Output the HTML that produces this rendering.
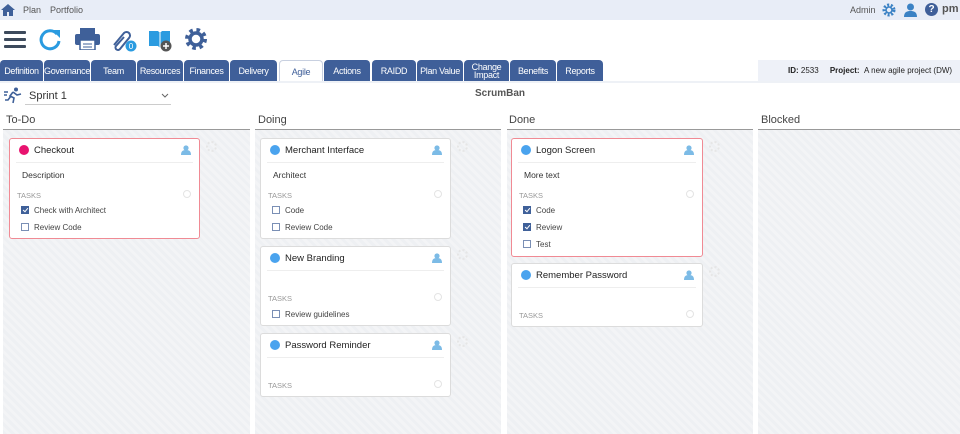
<!DOCTYPE html><html><head><style>
*{box-sizing:border-box;margin:0;padding:0}
body{width:960px;height:434px;overflow:hidden;background:#fff;font-family:"Liberation Sans",sans-serif;position:relative;color:#333}
.a{position:absolute}
.top{left:0;top:0;width:960px;height:20px;background:#e8edf7}
.tab{position:absolute;top:60px;height:22px;background:#3f5f99;color:#fff;font-size:9px;text-align:center;line-height:22px;border-radius:4px 4px 0 0;letter-spacing:-0.3px}
.col{position:absolute;top:129px;height:305px;background:repeating-linear-gradient(45deg,#eef0f3 0 3px,#f3f4f6 3px 6px);border-top:1px solid #999}
.ch{position:absolute;top:114px;font-size:11px;color:#444}
.card{position:absolute;background:#fff;border:1px solid #dcdcdc;border-radius:3px;font-size:9px}
.card.r{border-color:#f08a94}
.dot{position:absolute;left:9px;top:6px;width:10px;height:10px;border-radius:50%;background:#4aa3ee}
.tt{position:absolute;left:24px;top:6px;font-size:9.5px;color:#222}
.ln{position:absolute;left:6px;right:6px;top:23px;border-top:1px solid #eee}
.usr{position:absolute;right:8px;top:6px;width:10px;height:10px}
.gear{position:absolute;right:-18px;top:2px;width:11px;height:11px;border-radius:50%;border:2px dotted #e6e6e6}
.tk{position:absolute;left:7px;font-size:7.5px;color:#999}
.pl{position:absolute;right:8px;width:8px;height:8px;border-radius:50%;border:1px solid #e4e4e4}
.it{position:absolute;left:11px;font-size:8px;color:#444}
.cb{display:inline-block;width:8px;height:8px;border:1px solid #7a8fb5;vertical-align:-1px;margin-right:5px;position:relative}
.cb.k{background:#3f6099;border-color:#3f6099}
.cb.k:after{content:"";position:absolute;left:2px;top:0;width:2px;height:4px;border:solid #fff;border-width:0 1px 1px 0;transform:rotate(40deg)}
.d{position:absolute;left:12px;top:31px;font-size:8.5px;color:#333}
</style></head><body>
<div class="a top"></div>
<svg class="a" style="left:1px;top:3px" width="14" height="13" viewBox="0 0 14 13"><path d="M7 1L0 7h2v6h4V9h2v4h4V7h2z" fill="#3f6099"/></svg>
<div class="a" style="left:23px;top:5px;font-size:9px;color:#555">Plan</div>
<div class="a" style="left:50px;top:5px;font-size:9px;color:#555">Portfolio</div>
<div class="a" style="left:850px;top:5px;font-size:9px;color:#555">Admin</div>
<svg class="a" style="left:882px;top:3px" width="14" height="14" viewBox="0 0 14 14"><circle cx="7" cy="7" r="5" fill="none" stroke="#3b82c4" stroke-width="3" stroke-dasharray="2 1.6"/><circle cx="7" cy="7" r="3" fill="none" stroke="#3b82c4" stroke-width="1.6"/></svg>
<svg class="a" style="left:904px;top:3px" width="13" height="14" viewBox="0 0 13 14"><circle cx="6.5" cy="4" r="3.5" fill="#3b82c4"/><path d="M0 14c0-5 3-6 6.5-6s6.5 1 6.5 6z" fill="#3b82c4"/></svg>
<div class="a" style="left:925px;top:3px;width:13px;height:13px;border-radius:50%;background:#3f5f99;color:#fff;font-size:10px;font-weight:bold;text-align:center;line-height:13px">?</div>
<div class="a" style="left:942px;top:3px;font-size:11px;font-weight:bold;color:#555">pm</div>
<svg class="a" style="left:4px;top:30px" width="22" height="18"><rect y="1" width="22" height="3" rx="1" fill="#3d4a5c"/><rect y="8" width="22" height="3" rx="1" fill="#3d4a5c"/><rect y="15" width="22" height="3" rx="1" fill="#3d4a5c"/></svg>
<svg class="a" style="left:38px;top:27px" width="24" height="24" viewBox="0 0 24 24"><path d="M19 7A9 9 0 1 0 21 14" fill="none" stroke="#2a9be0" stroke-width="3"/><path d="M14 3h8v8z" fill="#2a9be0"/></svg>
<svg class="a" style="left:75px;top:28px" width="25" height="22" viewBox="0 0 25 22"><rect x="5" y="0" width="15" height="6" fill="#3f6099"/><rect x="0" y="6" width="25" height="11" rx="2" fill="#3f6099"/><rect x="5" y="12" width="15" height="10" fill="#fff" stroke="#3f6099" stroke-width="1.5"/><path d="M8 16h9M8 19h9" stroke="#3f6099"/></svg>
<svg class="a" style="left:111px;top:28px" width="26" height="24" viewBox="0 0 26 24"><path d="M3 17L13 5a3.5 3.5 0 0 1 5 5L9 21a2.5 2.5 0 0 1-4-3l8-9" fill="none" stroke="#3f6099" stroke-width="2"/><circle cx="20" cy="18" r="5.5" fill="#2a9be0"/><text x="20" y="21" font-size="8" fill="#fff" text-anchor="middle" font-family="Liberation Sans">0</text></svg>
<svg class="a" style="left:148px;top:28px" width="24" height="24" viewBox="0 0 24 24"><path d="M1 3h9l2 2 2-2h8v15h-8l-2 2-2-2H1z" fill="#2a9be0"/><path d="M12 5v15" stroke="#fff"/><circle cx="18" cy="18" r="5.5" fill="#555"/><path d="M18 15v6M15 18h6" stroke="#fff" stroke-width="1.5"/></svg>
<svg class="a" style="left:184px;top:27px" width="24" height="24" viewBox="0 0 24 24"><circle cx="12" cy="12" r="8.5" fill="none" stroke="#3f6099" stroke-width="5" stroke-dasharray="3.3 3.4"/><circle cx="12" cy="12" r="6" fill="none" stroke="#3f6099" stroke-width="3.5"/></svg>
<div class="tab" style="left:0;width:43px">Definition</div>
<div class="tab" style="left:44px;width:46px">Governance</div>
<div class="tab" style="left:91px;width:45px">Team</div>
<div class="tab" style="left:137px;width:46px">Resources</div>
<div class="tab" style="left:184px;width:45px">Finances</div>
<div class="tab" style="left:230px;width:47px">Delivery</div>
<div class="tab" style="left:279px;width:44px;background:#fff;color:#3f5f99;border:1px solid #c8d0e0;border-bottom:none">Agile</div>
<div class="tab" style="left:324px;width:46px">Actions</div>
<div class="tab" style="left:372px;width:44px">RAIDD</div>
<div class="tab" style="left:417px;width:46px">Plan Value</div>
<div class="tab" style="left:464px;width:45px;line-height:8px;padding-top:3px">Change<br>Impact</div>
<div class="tab" style="left:510px;width:46px">Benefits</div>
<div class="tab" style="left:557px;width:46px">Reports</div>
<div class="a" style="left:0;top:81px;width:960px;height:2px;background:#eef1f6"></div>
<div class="a" style="left:758px;top:60px;width:202px;height:21px;background:#eef1f8;font-size:8px;line-height:21px;padding-left:30px;color:#222"><b>ID:</b> 2533 &nbsp;&nbsp;&nbsp;&nbsp;<b>Project:</b> &nbsp;A new agile project (DW)</div>
<svg class="a" style="left:4px;top:87px" width="18" height="17" viewBox="0 0 18 17"><circle cx="12" cy="2.5" r="2" fill="#3f6099"/><path d="M9 5l-3 4 4 2-1 5M9 5l4 3 4-1M7 9l-3 4H1M0 5h4M0 8h3" stroke="#3f6099" stroke-width="1.6" fill="none"/></svg>
<div class="a" style="left:29px;top:90px;font-size:11px;color:#333">Sprint 1</div>
<svg class="a" style="left:161px;top:93px" width="8" height="5"><path d="M1 1l3 3 3-3" stroke="#666" fill="none"/></svg>
<div class="a" style="left:25px;top:104px;width:146px;border-top:1px solid #ccc"></div>
<div class="a" style="left:475px;top:88px;font-size:10px;font-weight:bold;color:#555">ScrumBan</div>
<div class="ch" style="left:6px">To-Do</div><div class="ch" style="left:258px">Doing</div><div class="ch" style="left:509px">Done</div><div class="ch" style="left:761px">Blocked</div>
<div class="col" style="left:3px;width:247px"></div>
<div class="col" style="left:255px;width:246px"></div>
<div class="col" style="left:507px;width:246px"></div>
<div class="col" style="left:758px;width:202px"></div>
<div class="card r" style="left:9px;top:138px;width:191px;height:101px"><div class="dot" style="background:#e8136f"></div><div class="tt">Checkout</div><div class="usr"><svg width="10" height="10"><circle cx="5" cy="3" r="2.6" fill="#7cbbe6"/><path d="M0 10c0-4 2-5 5-5s5 1 5 5z" fill="#7cbbe6"/></svg></div><div class="gear"></div><div class="ln"></div><div class="d">Description</div><div class="tk" style="top:52px">TASKS</div><div class="pl" style="top:51px"></div><div class="it" style="top:67px"><span class="cb k"></span>Check with Architect</div><div class="it" style="top:84px"><span class="cb"></span>Review Code</div></div>
<div class="card" style="left:260px;top:138px;width:191px;height:101px"><div class="dot"></div><div class="tt">Merchant Interface</div><div class="usr"><svg width="10" height="10"><circle cx="5" cy="3" r="2.6" fill="#7cbbe6"/><path d="M0 10c0-4 2-5 5-5s5 1 5 5z" fill="#7cbbe6"/></svg></div><div class="gear"></div><div class="ln"></div><div class="d">Architect</div><div class="tk" style="top:52px">TASKS</div><div class="pl" style="top:51px"></div><div class="it" style="top:67px"><span class="cb"></span>Code</div><div class="it" style="top:84px"><span class="cb"></span>Review Code</div></div>
<div class="card" style="left:260px;top:246px;width:191px;height:80px"><div class="dot"></div><div class="tt">New Branding</div><div class="usr"><svg width="10" height="10"><circle cx="5" cy="3" r="2.6" fill="#7cbbe6"/><path d="M0 10c0-4 2-5 5-5s5 1 5 5z" fill="#7cbbe6"/></svg></div><div class="gear"></div><div class="ln"></div><div class="tk" style="top:47px">TASKS</div><div class="pl" style="top:46px"></div><div class="it" style="top:63px"><span class="cb"></span>Review guidelines</div></div>
<div class="card" style="left:260px;top:333px;width:191px;height:64px"><div class="dot"></div><div class="tt">Password Reminder</div><div class="usr"><svg width="10" height="10"><circle cx="5" cy="3" r="2.6" fill="#7cbbe6"/><path d="M0 10c0-4 2-5 5-5s5 1 5 5z" fill="#7cbbe6"/></svg></div><div class="gear"></div><div class="ln"></div><div class="tk" style="top:47px">TASKS</div><div class="pl" style="top:46px"></div></div>
<div class="card r" style="left:511px;top:138px;width:192px;height:119px"><div class="dot"></div><div class="tt">Logon Screen</div><div class="usr"><svg width="10" height="10"><circle cx="5" cy="3" r="2.6" fill="#7cbbe6"/><path d="M0 10c0-4 2-5 5-5s5 1 5 5z" fill="#7cbbe6"/></svg></div><div class="gear"></div><div class="ln"></div><div class="d">More text</div><div class="tk" style="top:52px">TASKS</div><div class="pl" style="top:51px"></div><div class="it" style="top:67px"><span class="cb k"></span>Code</div><div class="it" style="top:84px"><span class="cb k"></span>Review</div><div class="it" style="top:101px"><span class="cb"></span>Test</div></div>
<div class="card" style="left:511px;top:263px;width:192px;height:64px"><div class="dot"></div><div class="tt">Remember Password</div><div class="usr"><svg width="10" height="10"><circle cx="5" cy="3" r="2.6" fill="#7cbbe6"/><path d="M0 10c0-4 2-5 5-5s5 1 5 5z" fill="#7cbbe6"/></svg></div><div class="gear"></div><div class="ln"></div><div class="tk" style="top:47px">TASKS</div><div class="pl" style="top:46px"></div></div>
</body></html>
